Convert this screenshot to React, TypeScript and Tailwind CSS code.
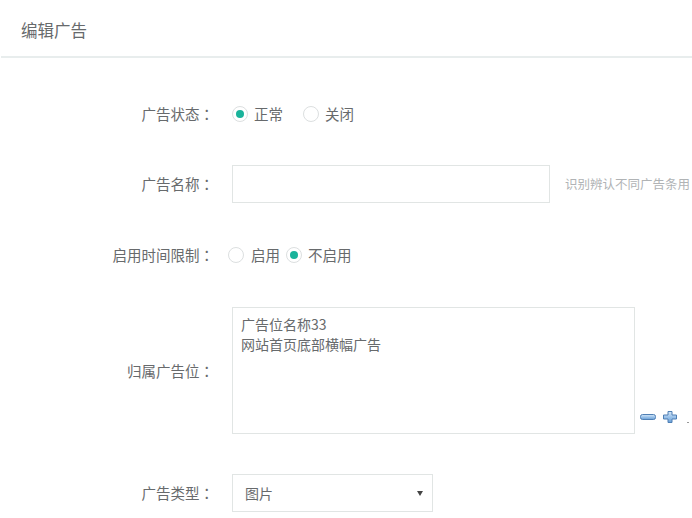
import React from "react";

const font = { fontFamily: '"Noto Sans CJK SC", "Noto Sans", sans-serif' };
const jp = { fontFamily: '"Noto Sans CJK JP", "Noto Sans CJK TC", sans-serif' };

function Radio({ checked }: { checked?: boolean }) {
  return (
    <span className="w-[16px] h-[16px] rounded-full border border-[#dcdfe0] bg-white flex items-center justify-center shrink-0">
      {checked && <span className="w-[8px] h-[8px] rounded-full bg-[#1ab39b]" />}
    </span>
  );
}

function Label({ children }: { children: React.ReactNode }) {
  return (
    <div className="w-[214px] shrink-0 text-right text-[14.5px] text-[#676a6c] whitespace-nowrap">
      {children}
      <span style={jp}>：</span>
    </div>
  );
}

export default function App() {
  return (
    <div className="w-[692px] h-[518px] bg-white overflow-hidden" style={font}>
      <div className="h-[56px] flex items-center pl-[21px] pt-[4px] text-[16.5px] text-[#676a6c]">编辑广告</div>
      <div className="h-[2px] ml-[1px] bg-[#e8eded]" />

      {/* 广告状态 */}
      <div className="mt-[37px] h-[38px] flex items-center">
        <Label>广告状态</Label>
        <div className="ml-[18px] flex items-center text-[14.5px] text-[#676a6c]">
          <Radio checked />
          <span className="ml-[6px]">正常</span>
          <span className="ml-[20px]"><Radio /></span>
          <span className="ml-[6px]">关闭</span>
        </div>
      </div>

      {/* 广告名称 */}
      <div className="mt-[32px] h-[38px] flex items-center">
        <Label>广告名称</Label>
        <div className="ml-[18px] w-[318px] h-[38px] border border-[#e1e5e4] bg-white" />
        <div className="ml-[15px] whitespace-nowrap text-[12.5px] text-[#b0b3b5]">识别辨认不同广告条用</div>
      </div>

      {/* 启用时间限制 */}
      <div className="mt-[33px] h-[38px] flex items-center">
        <Label>启用时间限制</Label>
        <div className="ml-[14px] flex items-center text-[14.5px] text-[#676a6c]">
          <Radio />
          <span className="ml-[7px]">启用</span>
          <span className="ml-[6px]"><Radio checked /></span>
          <span className="ml-[6px]">不启用</span>
        </div>
      </div>

      {/* 归属广告位 */}
      <div className="mt-[33px] flex items-center">
        <Label>归属广告位</Label>
        <div className="ml-[18px] w-[403px] h-[127px] border border-[#e1e5e4] bg-white pl-[8px] pt-[6px] text-[14px] leading-[20px] text-[#676a6c]">
          <div>广告位名称33</div>
          <div>网站首页底部横幅广告</div>
        </div>
        <div className="self-end mb-[11px] ml-[5px] flex items-center">
          <svg width="16" height="6" viewBox="0 0 16 6">
            <defs>
              <linearGradient id="gm" x1="0" y1="0" x2="0" y2="1">
                <stop offset="0" stopColor="#d6e8f8" />
                <stop offset="0.5" stopColor="#9cc3ea" />
                <stop offset="1" stopColor="#6a9fd6" />
              </linearGradient>
            </defs>
            <rect x="0.5" y="0.5" width="15" height="5" rx="2" fill="url(#gm)" stroke="#4f7fb4" strokeWidth="1" />
          </svg>
          <svg className="ml-[7px]" width="14" height="12" viewBox="0 0 14 12">
            <defs>
              <linearGradient id="gp" x1="0" y1="0" x2="0" y2="1">
                <stop offset="0" stopColor="#d6e8f8" />
                <stop offset="0.5" stopColor="#9cc3ea" />
                <stop offset="1" stopColor="#6a9fd6" />
              </linearGradient>
            </defs>
            <path d="M5 0.5 H9 V4 H13.5 V8 H9 V11.5 H5 V8 H0.5 V4 H5 Z" fill="url(#gp)" stroke="#4f7fb4" strokeWidth="1" strokeLinejoin="round" />
          </svg>
          <span className="ml-[10px] w-[2px] h-[1px] bg-[#999] self-end" />
        </div>
      </div>

      {/* 广告类型 */}
      <div className="mt-[40px] h-[38px] flex items-center">
        <Label>广告类型</Label>
        <div className="ml-[18px] w-[201px] h-[38px] border border-[#e1e5e4] bg-white flex items-center pl-[12px] pr-[8px] text-[14px] text-[#676a6c]">
          <span className="flex-1">图片</span>
          <svg width="6" height="6" viewBox="0 0 6 6" className="mr-[1px]">
            <path d="M0 1 H6 L3 6 Z" fill="#444" />
          </svg>
        </div>
      </div>
    </div>
  );
}
